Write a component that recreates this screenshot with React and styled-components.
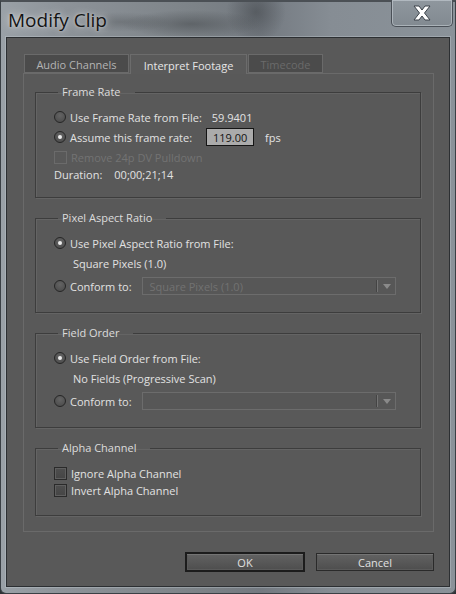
import React from "react";
import styled, { createGlobalStyle } from "styled-components";

const GlobalStyle = createGlobalStyle`
  html, body {
    margin: 0;
    padding: 0;
    width: 456px;
    height: 594px;
    overflow: hidden;
    background: #2d3236;
  }
`;

// Aero-ish window frame
const Window = styled.div`
  width: 456px;
  height: 594px;
  box-sizing: border-box;
  display: flex;
  flex-direction: column;
  border: 1px solid #3a4045;
  border-top: 2px solid #4b5055;
  border-radius: 0 0 6px 6px;
  background:
    radial-gradient(ellipse 70px 14px at 190px 22px, rgba(70, 74, 78, 0.55), transparent),
    radial-gradient(ellipse 50px 10px at 120px 20px, rgba(80, 84, 88, 0.4), transparent),
    radial-gradient(ellipse 30px 30px at 255px 10px, rgba(60, 64, 68, 0.5), transparent),
    linear-gradient(90deg, #9aa1a7 0px, #8d9399 60px, #7c8287 200px, #737980 260px, #868d94 330px, #8a9299 456px);
  font-family: "Open Sans", "Liberation Sans", sans-serif;
`;

const TitleBar = styled.div`
  height: 35px;
  display: flex;
  justify-content: space-between;
  align-items: flex-start;
  padding-left: 7px;
  padding-right: 2px;
`;

const Title = styled.div`
  margin-top: 5px;
  font-size: 19px;
  color: #141414;
  text-shadow: 0 0 8px rgba(255, 255, 255, 0.7), 0 0 3px rgba(255, 255, 255, 0.5);
`;

const CloseButton = styled.div`
  width: 62px;
  height: 27px;
  margin-top: -2px;
  box-sizing: border-box;
  border: 1px solid #4a5057;
  border-top: none;
  border-radius: 0 0 5px 5px;
  box-shadow: inset 0 0 0 1px rgba(220, 226, 232, 0.45);
  background: linear-gradient(#8f979e, #828a91);
  display: flex;
  align-items: center;
  justify-content: center;
`;

const Client = styled.div`
  flex: 1;
  margin: 0 5px 6px 5px;
  border: 1px solid #2c2f32;
  box-shadow: 0 0 0 1px rgba(200, 208, 214, 0.35);
  background: #595959;
  padding: 16px 15px 0 16px;
  display: flex;
  flex-direction: column;
  color: #e2e2e2;
  font-size: 11px;
`;

const TabStrip = styled.div`
  display: flex;
  gap: 1px;
  padding-left: 1px;
  height: 19px;
`;

const Tab = styled.div`
  box-sizing: border-box;
  width: ${(p) => p.$w}px;
  height: ${(p) => (p.$active ? 20 : 19)}px;
  display: flex;
  align-items: center;
  justify-content: center;
  border: 1px solid ${(p) => (p.$active ? "#6c6c6c" : "#6a6a6a")};
  border-bottom: ${(p) => (p.$active ? "none" : "1px solid #6a6a6a")};
  background: ${(p) => (p.$active ? "#5a5a5a" : "#4b4b4b")};
  color: ${(p) => (p.$disabled ? "#6a6a6a" : p.$active ? "#e6e6e6" : "#b4b4b4")};
  position: relative;
  z-index: ${(p) => (p.$active ? 1 : 0)};
  padding-top: 1px;
`;

const Panel = styled.div`
  box-sizing: border-box;
  height: 459px;
  border: 1px solid #6a6a6a;
  padding: 11px 12px 0 11px;
  display: flex;
  flex-direction: column;
  gap: 13px;
`;

const Group = styled.fieldset`
  margin: 0;
  padding: ${(p) => p.$pt || 8}px 0 16px 18px;
  border: 1px solid #3d3d3d;
  box-shadow: inset 1px 1px 0 #646464, 1px 1px 0 #646464;
  min-width: 0;
  display: flex;
  flex-direction: column;
`;

const Legend = styled.legend`
  margin-left: 4px;
  padding: 0 14px 0 4px;
  line-height: 14px;
  color: #dcdcdc;
`;

const Row = styled.div`
  display: flex;
  align-items: center;
  height: ${(p) => p.$h || 20}px;
  margin-top: ${(p) => p.$mt || 0}px;
  padding-left: ${(p) => p.$indent || 0}px;
  color: ${(p) => (p.$disabled ? "#737373" : "#e2e2e2")};
`;

const Radio = styled.span`
  flex: none;
  width: 12px;
  height: 12px;
  box-sizing: border-box;
  border-radius: 50%;
  border: 1px solid #262626;
  background: radial-gradient(circle at 50% 35%, #646464, #484848);
  margin-right: 4px;
  display: flex;
  align-items: center;
  justify-content: center;
  &::after {
    content: "";
    display: ${(p) => (p.$checked ? "block" : "none")};
    width: 4px;
    height: 4px;
    border-radius: 50%;
    background: #ececec;
  }
`;

const Check = styled.span`
  flex: none;
  width: 13px;
  height: 13px;
  box-sizing: border-box;
  border: 1px solid ${(p) => (p.$disabled ? "#6b6b6b" : "#2a2a2a")};
  background: ${(p) => (p.$disabled ? "transparent" : "linear-gradient(#4e4e4e, #454545)")};
  box-shadow: ${(p) => (p.$disabled ? "none" : "inset 0 0 0 1px #5f5f5f")};
  margin-right: 4px;
`;

const Value = styled.span`
  margin-left: ${(p) => p.$ml || 10}px;
`;

const NumberInput = styled.div`
  box-sizing: border-box;
  width: 48px;
  height: 18px;
  margin-left: 14px;
  border: 1px solid #141414;
  background: #ababab;
  color: #141414;
  display: flex;
  align-items: center;
  justify-content: center;
`;

const Select = styled.div`
  box-sizing: border-box;
  width: 254px;
  height: 18px;
  margin-left: 10px;
  border: 1px solid #6c6c6c;
  background: #575757;
  color: #727272;
  display: flex;
  align-items: center;
  padding-left: 7px;
`;

const SelectText = styled.span`
  flex: 1;
`;

const SelectButton = styled.span`
  width: 17px;
  height: 12px;
  border-left: 1px solid #747474;
  box-shadow: -1px 0 0 #444;
  display: flex;
  align-items: center;
  justify-content: center;
  &::after {
    content: "";
    border-left: 4px solid transparent;
    border-right: 4px solid transparent;
    border-top: 5px solid #8a8a8a;
    margin-left: 1px;
  }
`;

const ButtonRow = styled.div`
  display: flex;
  justify-content: flex-end;
  align-items: center;
  gap: 12px;
  padding-top: 20px;
`;

const Button = styled.div`
  box-sizing: border-box;
  width: ${(p) => (p.$default ? 120 : 118)}px;
  height: ${(p) => (p.$default ? 20 : 18)}px;
  border: ${(p) => (p.$default ? "2px solid #1c1c1c" : "1px solid #2a2a2a")};
  background: linear-gradient(#626262, #4e4e4e);
  box-shadow: inset 0 1px 0 #747474, inset 0 0 0 1px #5a5a5a;
  display: flex;
  align-items: center;
  justify-content: center;
  color: #e0e0e0;
  font-size: 11px;
  margin-right: ${(p) => (p.$default ? -1 : 0)}px;
`;

const CloseIcon = () => (
  <svg width="22" height="16" viewBox="0 0 22 16">
    <path
      d="M3 1 H8 L11 5 L14 1 H19 L13.5 8 L19 15 H14 L11 11 L8 15 H3 L8.5 8 Z"
      fill="#ffffff"
      stroke="#3c434a"
      strokeWidth="1"
      strokeLinejoin="round"
    />
  </svg>
);

const App = () => (
  <>
    <GlobalStyle />
    <Window>
      <TitleBar>
        <Title>Modify Clip</Title>
        <CloseButton>
          <CloseIcon />
        </CloseButton>
      </TitleBar>
      <Client>
        <TabStrip>
          <Tab $w={105}>Audio Channels</Tab>
          <Tab $w={117} $active>
            Interpret Footage
          </Tab>
          <Tab $w={75} $disabled>
            Timecode
          </Tab>
        </TabStrip>
        <Panel>
          <Group>
            <Legend>Frame Rate</Legend>
            <Row>
              <Radio />
              Use Frame Rate from File:
              <Value>59.9401</Value>
            </Row>
            <Row>
              <Radio $checked />
              Assume this frame rate:
              <NumberInput>119.00</NumberInput>
              <Value $ml={11}>fps</Value>
            </Row>
            <Row $disabled>
              <Check $disabled />
              Remove 24p DV Pulldown
            </Row>
            <Row $h={14}>
              Duration:
              <Value $ml={12}>00;00;21;14</Value>
            </Row>
          </Group>

          <Group>
            <Legend>Pixel Aspect Ratio</Legend>
            <Row>
              <Radio $checked />
              Use Pixel Aspect Ratio from File:
            </Row>
            <Row $indent={19}>Square Pixels (1.0)</Row>
            <Row $mt={3}>
              <Radio />
              Conform to:
              <Select>
                <SelectText>Square Pixels (1.0)</SelectText>
                <SelectButton />
              </Select>
            </Row>
          </Group>

          <Group>
            <Legend>Field Order</Legend>
            <Row>
              <Radio $checked />
              Use Field Order from File:
            </Row>
            <Row $indent={19}>No Fields (Progressive Scan)</Row>
            <Row $mt={3}>
              <Radio />
              Conform to:
              <Select>
                <SelectText />
                <SelectButton />
              </Select>
            </Row>
          </Group>

          <Group $pt={10}>
            <Legend>Alpha Channel</Legend>
            <Row $h={17}>
              <Check />
              Ignore Alpha Channel
            </Row>
            <Row $h={17}>
              <Check />
              Invert Alpha Channel
            </Row>
          </Group>
        </Panel>
        <ButtonRow>
          <Button $default>OK</Button>
          <Button>Cancel</Button>
        </ButtonRow>
      </Client>
    </Window>
  </>
);

export default App;
